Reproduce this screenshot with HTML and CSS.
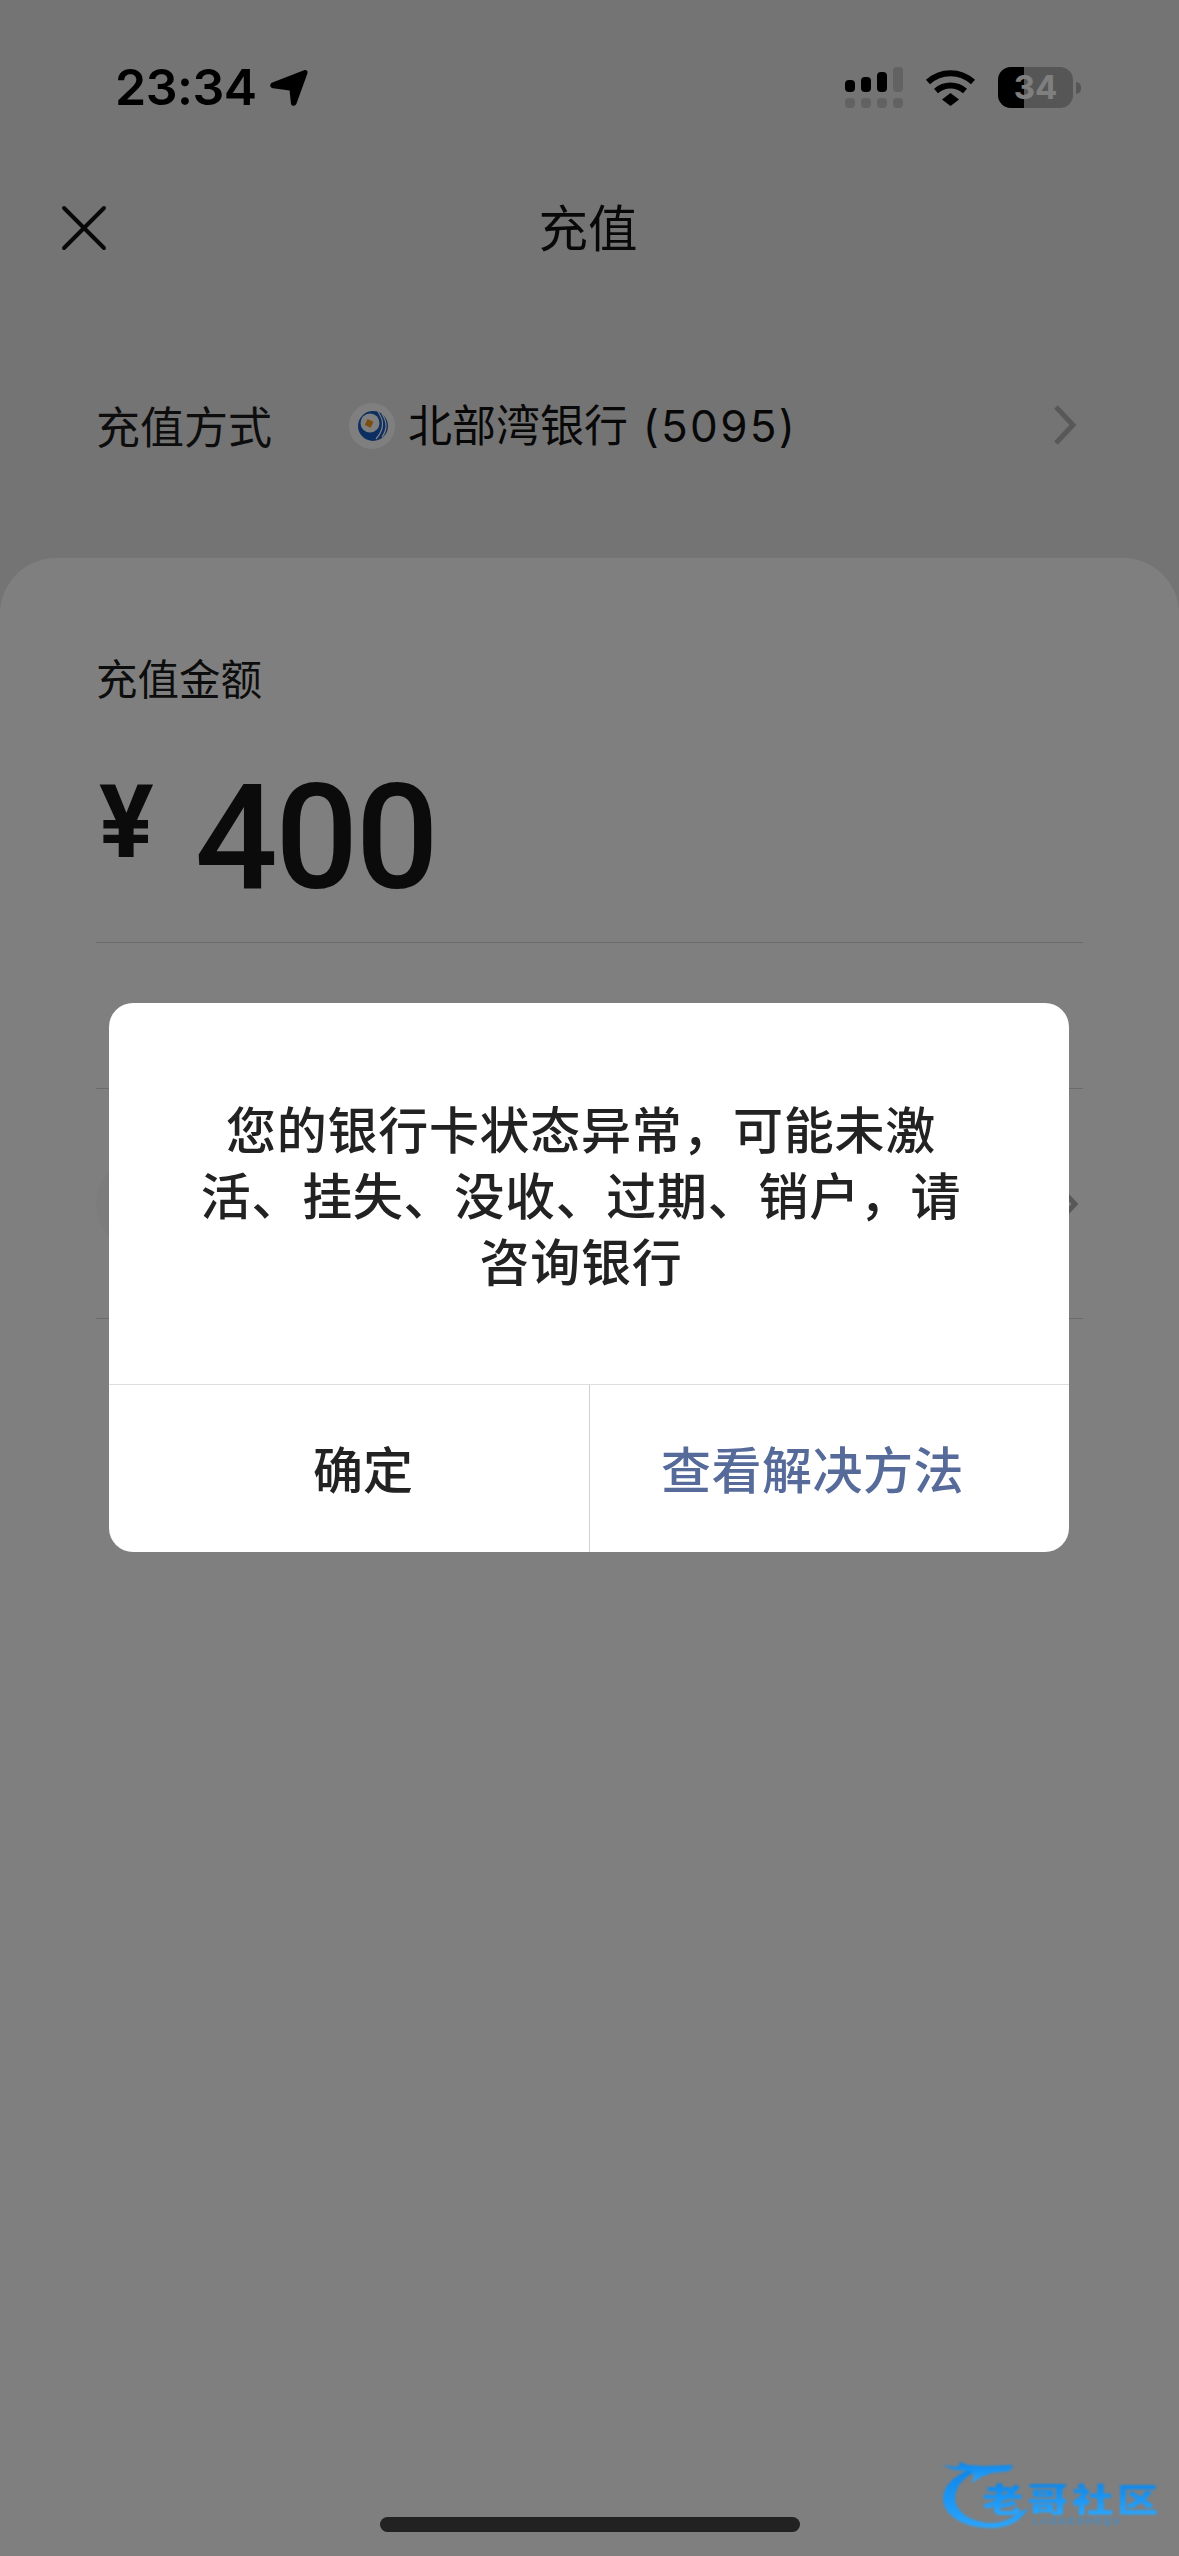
FILE: index.html
```html
<!DOCTYPE html>
<html lang="zh-CN">
<head>
<meta charset="utf-8">
<title>充值</title>
<link rel="stylesheet" href="styles.css">
</head>
<body>
<div class="screen">
  <header class="status">
    <div class="status-left">
      <span class="time">23:34</span>
      <svg class="loc" width="40" height="39" viewBox="0 0 40 39"><path d="M35 2.200C37.400 1.200 39.200 3 38.400 5.400L27.500 35.600C26.300 38.800 22.300 38.500 21.900 35.200L20.600 22.600 4 20.300C.6 19.800.2 15.800 3.400 14.500Z" fill="#000"/></svg>
    </div>
    <div class="status-right">
      <svg class="signal" width="58" height="41" viewBox="0 0 58 41">
        <rect x="0" y="13" width="10" height="12" rx="4" fill="#000"/>
        <rect x="16" y="10" width="10" height="15" rx="4" fill="#000"/>
        <rect x="32" y="5" width="10" height="20" rx="4" fill="#000"/>
        <rect x="48" y="0" width="10" height="25" rx="4" fill="#c4c4c4"/>
        <rect x="0" y="31" width="10" height="10" rx="4" fill="#c4c4c4"/>
        <rect x="16" y="31" width="10" height="10" rx="4" fill="#c4c4c4"/>
        <rect x="32" y="31" width="10" height="10" rx="4" fill="#c4c4c4"/>
        <rect x="48" y="31" width="10" height="10" rx="4" fill="#c4c4c4"/>
      </svg>
      <svg class="wifi" width="51" height="37" viewBox="0 0 51 37">
        <path d="M3 13A33 33 0 0 1 48 13" fill="none" stroke="#000" stroke-width="6"/>
        <path d="M11 22A22 22 0 0 1 40 22" fill="none" stroke="#000" stroke-width="6"/>
        <path d="M25.500 24L34 30.500 25.500 37 17 30.500Z" fill="#000"/>
      </svg>
      <div class="battery">
        <span class="battery-fill"></span>
        <span class="battery-num">34</span>
      </div>
      <span class="battery-nub"></span>
    </div>
  </header>

  <nav class="nav">
    <svg class="close" width="46" height="46" viewBox="0 0 46 46"><path d="M3 3L43 43M43 3L3 43" stroke="#111" stroke-width="4" stroke-linecap="round"/></svg>
    <h1 class="title">充值</h1>
  </nav>

  <section class="method">
    <span class="method-label">充值方式</span>
    <span class="bank-logo">
      <svg width="46" height="46" viewBox="0 0 46 46">
        <circle cx="23" cy="23" r="23" fill="#fff"/>
        <circle cx="24" cy="23" r="15" fill="#1a5cc0"/>
        <circle cx="21" cy="20" r="9.500" fill="#fff"/>
        <path d="M29 9Q39 22 27 36M33 11Q41 23 33 34" fill="none" stroke="#fff" stroke-width="1.200"/>
        <rect x="17" y="17" width="6.500" height="6.500" transform="rotate(25 20 20)" fill="#f59a20"/>
      </svg>
    </span>
    <span class="bank-name">北部湾银行<span class="bank-no"> (5095)</span></span>
    <svg class="chevron" width="24" height="40" viewBox="0 0 24 40"><path d="M3 2L20 20 3 38" fill="none" stroke="#b0b0b0" stroke-width="5"/></svg>
  </section>

  <main class="card">
    <div class="amount-label">充值金额</div>
    <div class="amount">
      <span class="yen">¥</span>
      <span class="value">400</span>
    </div>
    <div class="row-plain"></div>
    <div class="row-item">
      <span class="row-circle"></span>
      <svg class="chevron chevron-row" width="24" height="40" viewBox="0 0 24 40"><path d="M3 2L20 20 3 38" fill="none" stroke="#b0b0b0" stroke-width="5"/></svg>
    </div>
  </main>

  <div class="overlay">
    <div class="dialog">
      <div class="dialog-body">
        <p class="dialog-text">您的银行卡状态异常&#xFF0C;可能未激活、挂失、没收、过期、销户&#xFF0C;请咨询银行</p>
      </div>
      <div class="dialog-actions">
        <div class="action action-ok">确定</div>
        <div class="action action-link">查看解决方法</div>
      </div>
    </div>
  </div>

  <div class="home-indicator"></div>

  <div class="watermark">
    <svg class="wm-dragon" width="100" height="80" viewBox="0 0 100 80">
      <defs>
        <linearGradient id="wmg" x1="0" y1="0" x2="0" y2="1">
          <stop offset="0" stop-color="#0c86ea"/>
          <stop offset="1" stop-color="#2aa6ff"/>
        </linearGradient>
      </defs>
      <path d="M30 14C12 22 3 32 3 44 4 62 26 73 50 73 68 73 82 66 88 53L78 58C70 65 60 68 50 68 32 67 16 58 15 44 15 33 22 24 33 18Z" fill="url(#wmg)"/>
      <path d="M2 10L18 12 20 7 28 10 44 11 73 10 70 16 52 18 41 22 32 28 34 20 30 16 14 15Z" fill="url(#wmg)"/>
    </svg>
    <div class="wm-title">老哥社区</div>
    <div class="wm-sub">LAOGESHEQU</div>
  </div>
</div>
</body>
</html>
```

FILE: styles.css
```css
* { box-sizing: border-box; }
html, body { margin: 0; padding: 0; }
body { font-family: "Noto Sans CJK SC", "Noto Sans", sans-serif; color: #1a1a1a; }

.screen {
  position: relative;
  width: 1179px;
  height: 2556px;
  overflow: hidden;
  background: #e8e8e8;
  display: flex;
  flex-direction: column;
}

/* status bar */
.status {
  height: 108px;
  padding: 67px 98px 0 115px;
  display: flex;
  justify-content: space-between;
  align-items: flex-start;
  flex: none;
}
.status-left { display: flex; align-items: center; gap: 12px; }
.time {
  font-family: Inter, "Liberation Sans", sans-serif;
  font-weight: 600;
  font-size: 50px;
  line-height: 41px;
  color: #000;
  letter-spacing: -0.5px;
}
.loc { display: block; }
.status-right { display: flex; align-items: flex-start; }
.signal { display: block; margin-right: 22px; }
.wifi { display: block; margin-top: 2px; margin-right: 22px; }
.battery {
  position: relative;
  width: 75px;
  height: 41px;
  border-radius: 13px;
  background: #acacac;
  overflow: hidden;
  display: flex;
  align-items: center;
  justify-content: center;
}
.battery-fill { position: absolute; left: 0; top: 0; bottom: 0; width: 26px; background: #000; }
.battery-num {
  position: relative;
  font-family: Inter, "Liberation Sans", sans-serif;
  font-weight: 700;
  font-size: 33px;
  line-height: 41px;
  color: #fff;
}
.battery-nub {
  width: 5px;
  height: 12px;
  margin: 15px 0 0 3px;
  border-radius: 0 6px 6px 0;
  background: #acacac;
}

/* nav */
.nav {
  flex: none;
  height: 80px;
  margin-top: 80px;
  padding: 0 64px 0 61px;
  display: grid;
  grid-template-columns: 1fr auto 1fr;
  align-items: center;
}
.close { display: block; }
.title { margin: -5px 0 0; font-size: 49.500px; font-weight: 400; line-height: 80px; color: #111; }

/* top-up method */
.method {
  flex: none;
  height: 100px;
  margin-top: 107px;
  padding: 0 102px 0 96px;
  display: flex;
  align-items: center;
}
.method-label { font-size: 44px; line-height: 60px; width: 176px; margin-top: -1px; }
.bank-logo { display: block; width: 46px; height: 46px; margin-left: 77px; margin-top: 1px; }
.bank-logo svg { display: block; }
.bank-name { margin-left: 13px; font-size: 44px; line-height: 60px; color: #111; margin-top: -1px; }
.bank-no { font-family: Inter, "Noto Sans", sans-serif; letter-spacing: 2.300px; }
.chevron { display: block; margin-left: auto; flex: none; }
.chevron-row { margin-right: 4px; }

/* card */
.card {
  flex: 1;
  margin-top: 83px;
  padding: 89px 96px 0;
  background: #fff;
  border-radius: 56px 56px 0 0;
}
.amount-label { font-size: 41.500px; line-height: 60px; }
.amount {
  margin-top: 48px;
  height: 160px;
  display: flex;
  align-items: flex-start;
  color: #161616;
}
.yen {
  font-family: Roboto, "Liberation Sans", sans-serif;
  font-weight: 700;
  font-size: 102px;
  line-height: 102px;
  margin: 16px 0 0 3px;
}
.value {
  font-family: Roboto, "Liberation Sans", sans-serif;
  font-weight: 500;
  font-size: 146px;
  line-height: 160px;
  letter-spacing: -2.500px;
  margin: 4px 0 0 41px;
}
.row-plain {
  height: 147px;
  margin-top: 27px;
  border-top: 1px solid #d6d6d6;
  border-bottom: 1px solid #d6d6d6;
}
.row-item {
  height: 230px;
  border-bottom: 1px solid #d6d6d6;
  display: flex;
  align-items: center;
}
.row-circle { display: block; width: 90px; height: 90px; border-radius: 50%; background: #f8f8f8; }

/* dialog */
.overlay {
  position: absolute;
  inset: 0;
  padding: 0 1px 2px 0;
  display: flex;
  align-items: center;
  justify-content: center;
  background: rgba(0, 0, 0, 0.5);
}
.dialog {
  width: 960px;
  height: 549px;
  border-radius: 24px;
  background: #fff;
  overflow: hidden;
  display: flex;
  flex-direction: column;
}
.dialog-body {
  flex: 1;
  padding: 0 93px 0 77px;
  display: flex;
  align-items: center;
}
.dialog-text {
  margin: 0;
  width: 100%;
  font-size: 50px;
  font-weight: 500;
  letter-spacing: 0.700px;
  line-height: 66px;
  text-align: center;
  color: #222;
}
.dialog-actions {
  flex: none;
  height: 168px;
  border-top: 1px solid #dedede;
  display: grid;
  grid-template-columns: 481px 1fr;
}
.action {
  font-size: 50px;
  font-weight: 500;
  line-height: 164px;
  text-align: center;
}
.action-ok { color: #222; padding-left: 28px; border-right: 1px solid #d0d0d0; }
.action-link { color: #576b9a; padding-right: 34px; letter-spacing: 0.500px; }

/* on top of the scrim */
.home-indicator {
  position: absolute;
  left: 380px;
  top: 2517px;
  width: 420px;
  height: 15px;
  border-radius: 8px;
  background: #222;
}
.watermark {
  position: absolute;
  left: 940px;
  top: 2455px;
  width: 230px;
  height: 80px;
  filter: blur(0.8px);
}
.wm-dragon { position: absolute; left: 0; top: 0; display: block; }
.wm-title {
  position: absolute;
  left: 42px;
  top: 27px;
  font-size: 33px;
  font-weight: 900;
  line-height: 33px;
  letter-spacing: 3px;
  white-space: nowrap;
  color: transparent;
  background: linear-gradient(#0c86ea, #2aa6ff);
  -webkit-background-clip: text;
  background-clip: text;
  transform: scaleX(1.25);
  transform-origin: left top;
}
.wm-sub {
  position: absolute;
  left: 93px;
  top: 61px;
  font-family: "Liberation Sans", sans-serif;
  font-size: 9px;
  line-height: 10px;
  letter-spacing: 2.600px;
  color: #1e96f5;
  white-space: nowrap;
}
```
